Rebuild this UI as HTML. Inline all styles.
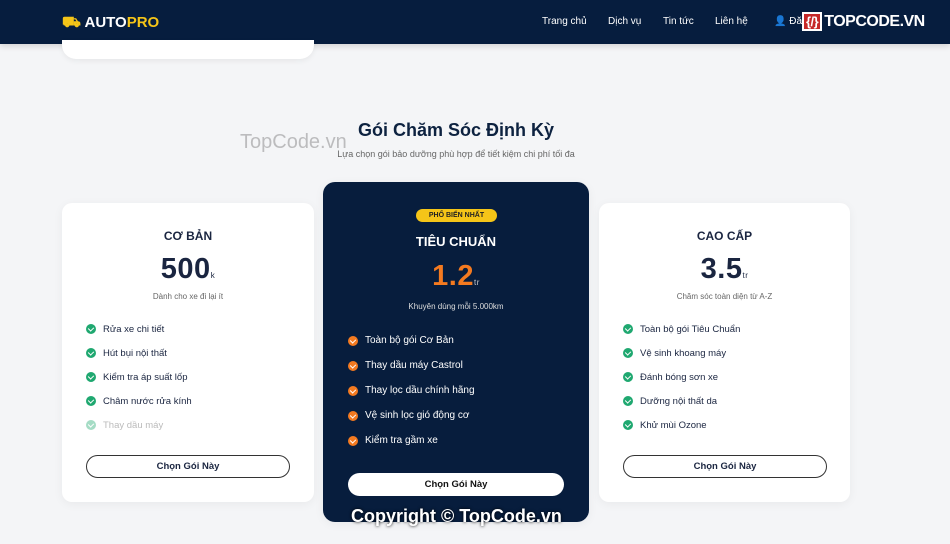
<!DOCTYPE html><html><head><meta charset="utf-8"><style>
*{margin:0;padding:0;box-sizing:border-box}
body{width:950px;height:544px;overflow:hidden;background:#f4f5f7;font-family:"Liberation Sans","Noto Sans CJK SC",sans-serif;position:relative;color:#1a2540}
.hdr{position:absolute;left:0;top:0;width:950px;height:44px;background:#061d3e;box-shadow:0 2px 6px rgba(0,0,0,.15)}
.logo{position:absolute;left:62px;top:14px;font-weight:bold;font-size:15px;color:#fff}
.logo b{color:#f5c518}
.nav{position:absolute;top:16px;font-size:10px;color:#fff}
.tc{position:absolute;left:802px;top:12px;font-weight:bold;font-size:16px;color:#fff;letter-spacing:-.5px}
.tc span{display:inline-block;background:#c62828;border:2px solid #fff;padding:0 2px;margin-right:2px;font-size:13px}
.top{position:absolute;left:62px;top:40px;width:252px;height:19px;background:#fff;border-radius:0 0 14px 14px;box-shadow:0 2px 6px rgba(0,0,0,.06)}
h2{position:absolute;left:0;width:912px;top:120px;text-align:center;font-size:18px;font-weight:bold;color:#0d2240}
.sub{position:absolute;left:0;width:912px;top:149px;text-align:center;font-size:9px;color:#666}
.card{position:absolute;background:#fff;border-radius:10px;box-shadow:0 2px 10px rgba(0,0,0,.05)}
.t{position:absolute;left:0;width:100%;text-align:center;font-weight:bold;font-size:12px}
.p{position:absolute;left:0;width:100%;text-align:center;font-weight:900;font-size:29px;letter-spacing:.5px}
.p small{font-size:8px;font-weight:normal}
.d{position:absolute;left:0;width:100%;text-align:center;font-size:8px;color:#666}
ul{position:absolute;list-style:none;font-size:9.5px}
li{height:24px;display:flex;align-items:center}
li i{width:10px;height:10px;border-radius:50%;background:#1fa870;margin-right:7px;display:inline-block;position:relative}
li i:after{content:"";position:absolute;left:3px;top:2px;width:3px;height:4px;border:solid #fff;border-width:0 1.3px 1.3px 0;transform:rotate(45deg)}
.btn{position:absolute;height:23px;border:1px solid #333;border-radius:12px;text-align:center;line-height:21px;font-size:9.5px;font-weight:bold}
</style></head><body>
<div class="hdr">
<div class="logo"><span style="color:#f5c518">⛟</span> AUTO<b>PRO</b></div>
<div class="nav" style="left:542px">Trang chủ</div>
<div class="nav" style="left:608px">Dịch vụ</div>
<div class="nav" style="left:663px">Tin tức</div>
<div class="nav" style="left:715px">Liên hệ</div>
<div class="nav" style="left:774px">👤 Đă</div>
<div class="tc"><span>{/}</span>TOPCODE.VN</div>
</div>
<div class="top"></div>
<h2>Gói Chăm Sóc Định Kỳ</h2>
<div class="sub">Lựa chọn gói bảo dưỡng phù hợp để tiết kiệm chi phí tối đa</div>
<div style="position:absolute;left:240px;top:131px;font-size:20px;color:rgba(120,120,120,.45)">TopCode.vn</div>

<div class="card" style="left:62px;top:203px;width:252px;height:299px">
<div class="t" style="top:26px">CƠ BẢN</div>
<div class="p" style="top:50px">500<small>k</small></div>
<div class="d" style="top:89px">Dành cho xe đi lại ít</div>
<ul style="left:24px;top:114px"><li><i></i>Rửa xe chi tiết</li><li><i></i>Hút bụi nội thất</li><li><i></i>Kiểm tra áp suất lốp</li><li><i></i>Châm nước rửa kính</li><li style="color:#bbb"><i style="background:#a5dcc5"></i>Thay dầu máy</li></ul>
<div class="btn" style="left:24px;top:252px;width:204px">Chọn Gói Này</div>
</div>

<div class="card" style="left:323px;top:182px;width:266px;height:340px;background:#071d3d;color:#fff;border-radius:12px">
<div style="position:absolute;left:93px;top:27px;width:81px;height:13px;background:#f5c518;border-radius:7px;color:#222;font-size:7px;font-weight:bold;text-align:center;line-height:13px">PHỔ BIẾN NHẤT</div>
<div class="t" style="top:52px;font-size:13px">TIÊU CHUẨN</div>
<div class="p" style="top:78px;color:#f47a20">1.2<small style="color:#ccc">tr</small></div>
<div class="d" style="top:120px;color:#ddd">Khuyên dùng mỗi 5.000km</div>
<ul style="left:25px;top:146px;font-size:10px"><li style="height:25px"><i style="background:#f47a20"></i>Toàn bộ gói Cơ Bản</li><li style="height:25px"><i style="background:#f47a20"></i>Thay dầu máy Castrol</li><li style="height:25px"><i style="background:#f47a20"></i>Thay lọc dầu chính hãng</li><li style="height:25px"><i style="background:#f47a20"></i>Vệ sinh lọc gió động cơ</li><li style="height:25px"><i style="background:#f47a20"></i>Kiểm tra gầm xe</li></ul>
<div class="btn" style="left:25px;top:291px;width:216px;background:#fff;color:#111;border:none;line-height:23px">Chọn Gói Này</div>
</div>

<div class="card" style="left:599px;top:203px;width:251px;height:299px">
<div class="t" style="top:26px">CAO CẤP</div>
<div class="p" style="top:50px">3.5<small>tr</small></div>
<div class="d" style="top:89px">Chăm sóc toàn diện từ A-Z</div>
<ul style="left:24px;top:114px"><li><i></i>Toàn bộ gói Tiêu Chuẩn</li><li><i></i>Vệ sinh khoang máy</li><li><i></i>Đánh bóng sơn xe</li><li><i></i>Dưỡng nội thất da</li><li><i></i>Khử mùi Ozone</li></ul>
<div class="btn" style="left:24px;top:252px;width:204px">Chọn Gói Này</div>
</div>
<div style="position:absolute;left:351px;top:506px;font-size:18px;font-weight:bold;color:#fff;text-shadow:0 0 3px #000">Copyright © TopCode.vn</div>
</body></html>
